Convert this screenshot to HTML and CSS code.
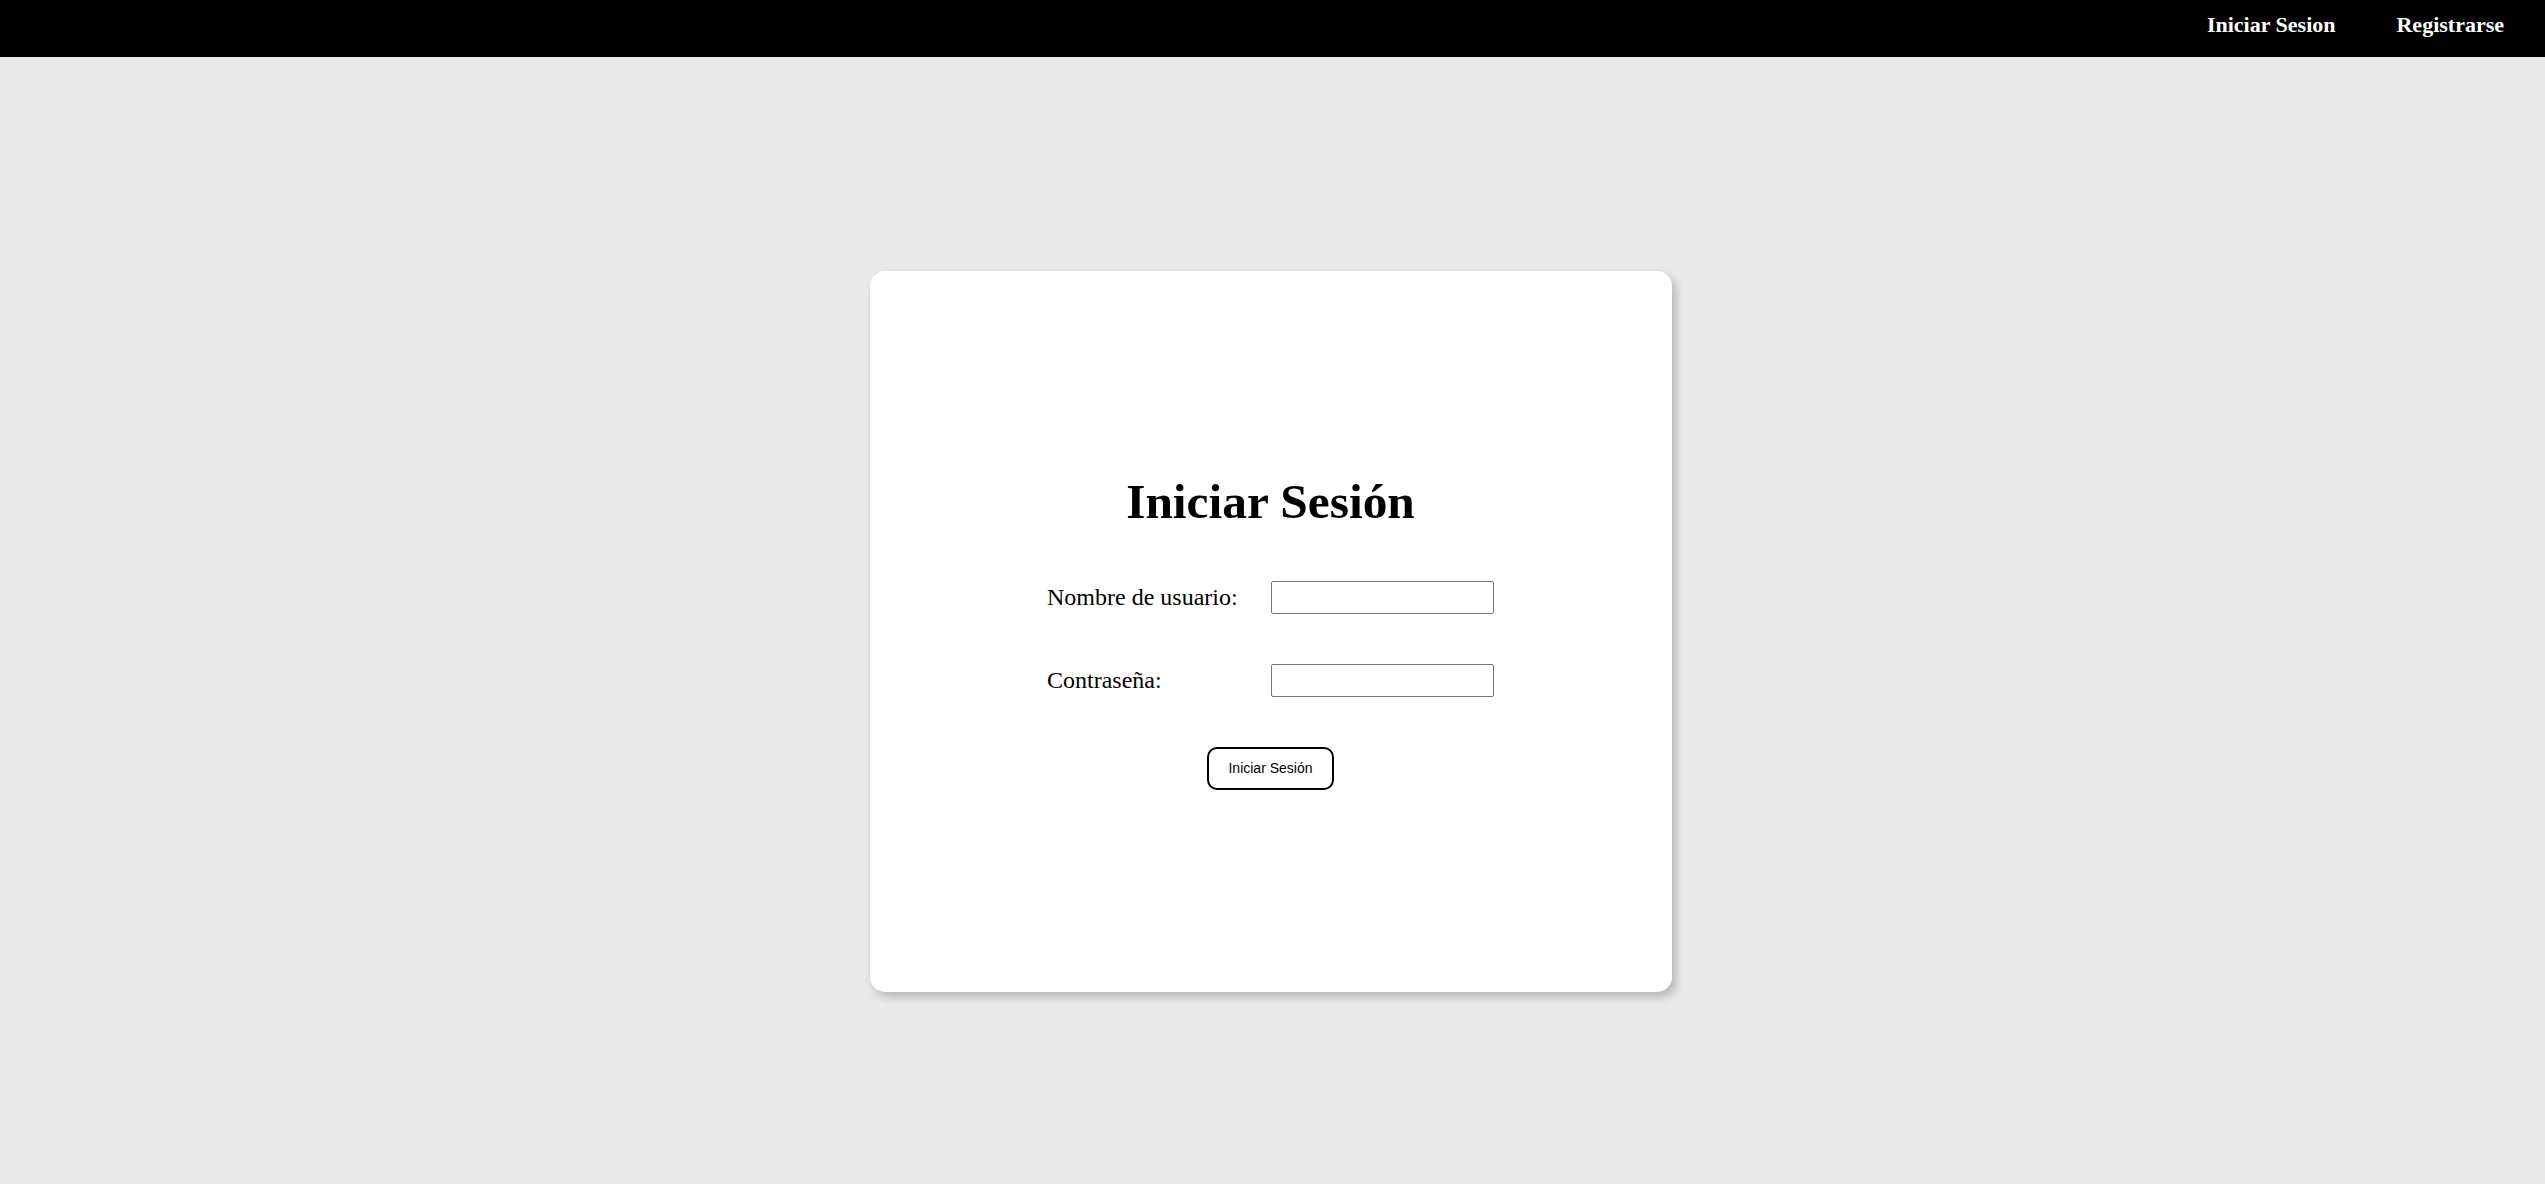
FILE: index.html
```html
<!DOCTYPE html>
<html lang="es">
<head>
<meta charset="utf-8">
<title>Iniciar Sesión</title>
<link rel="stylesheet" href="styles.css">
</head>
<body>
<nav class="topbar">
  <a class="topbar-link" href="#">Iniciar Sesion</a>
  <a class="topbar-link" href="#">Registrarse</a>
</nav>
<main class="main">
  <section class="card">
    <h1 class="card-title">Iniciar Sesión</h1>
    <form class="login-form">
      <label class="field-label" for="user">Nombre de usuario:</label>
      <input class="field-input" id="user" type="text">
      <label class="field-label" for="pass">Contraseña:</label>
      <input class="field-input" id="pass" type="password">
    </form>
    <button class="submit-btn" type="button">Iniciar Sesión</button>
  </section>
</main>
</body>
</html>
```
FILE: styles.css
```css
* { box-sizing: border-box; }
html, body { margin: 0; padding: 0; }
body {
  background: #e9e9e9;
  font-family: "Liberation Serif", "Times New Roman", serif;
  color: #000;
  min-height: 100vh;
}
.topbar {
  height: 57px;
  background: #000;
  display: flex;
  justify-content: flex-end;
  align-items: flex-start;
  gap: 61px;
  padding: 12px 41px 0 0;
}
.topbar-link {
  color: #fff;
  text-decoration: none;
  font-weight: bold;
  font-size: 22px;
  line-height: normal;
}
.main {
  display: flex;
  justify-content: center;
  padding: 214px 4px 0 0;
}
.card {
  width: 802px;
  height: 721px;
  background: #fff;
  border-radius: 15px;
  box-shadow: 4px 5px 10px rgba(0, 0, 0, 0.22);
  display: flex;
  flex-direction: column;
  align-items: center;
  justify-content: center;
}
.card-title {
  margin: 0 0 51px 0;
  font-size: 49.4px;
  font-weight: bold;
  line-height: normal;
}
.login-form {
  display: grid;
  grid-template-columns: 224px 223px;
  row-gap: 50px;
  align-items: center;
}
.field-label {
  font-size: 24px;
  line-height: normal;
}
.field-input {
  width: 223px;
  height: 33px;
  border: 1px solid #767676;
  border-radius: 2px;
  padding: 1px 6px;
  font-family: "Liberation Sans", Arial, sans-serif;
  font-size: 20px;
  background: #fff;
}
.submit-btn {
  margin-top: 50px;
  background: #fff;
  border: 2px solid #000;
  border-radius: 10px;
  padding: 11px 19px;
  font-family: "Liberation Sans", Arial, sans-serif;
  font-size: 14px;
  line-height: 17px;
  color: #000;
}
```
